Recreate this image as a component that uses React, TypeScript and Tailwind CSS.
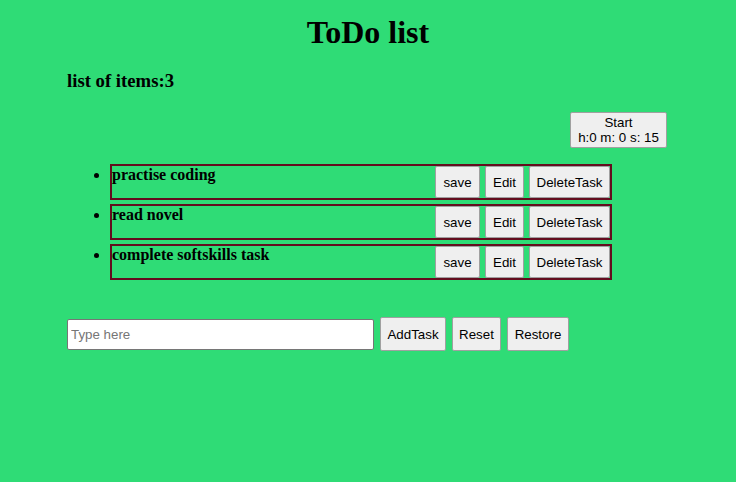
import React from "react";

const tasks = ["practise coding", "read novel", "complete softskills task"];

const btn =
  "bg-[#efefef] border border-[#a0a0a0] rounded-[2px] text-[13.33px] font-normal text-black font-['Liberation_Sans',Arial,sans-serif] leading-[15px]";

export default function App() {
  return (
    <div className="min-h-[482px] w-full bg-[#2fdc76] font-['Liberation_Serif','Times_New_Roman',serif] text-black">
      <h1 className="pt-[14px] text-center text-[32px] font-bold leading-[36px]">ToDo list</h1>
      <div className="ml-[67px] w-[600px]">
        <h3 className="mt-[20px] text-[18.72px] font-bold leading-[21px]">list of items:3</h3>
        <div className="mt-[21px] flex justify-end">
          <button className={`${btn} w-[97px] h-[36px] border-[#8a8a8a]`}>
            Start
            <br />
            h:0 m: 0 s: 15
          </button>
        </div>
        <ul className="mt-[16px] list-disc pl-[43px] flex flex-col gap-[4px]">
          {tasks.map((t) => (
            <li key={t} className="h-[36px] w-[502px] text-[16px] font-bold leading-[18px]">
              <div className="flex h-[36px] border-2 border-[#640d1f]">
                <span className="flex-1">{t}</span>
                <div className="flex gap-[5px]">
                  <button className={`${btn} w-[45px]`}>save</button>
                  <button className={`${btn} w-[39px]`}>Edit</button>
                  <button className={`${btn} w-[81px]`}>DeleteTask</button>
                </div>
              </div>
            </li>
          ))}
        </ul>
        <div className="mt-[37px] flex items-center gap-[6px]">
          <input
            placeholder="Type here"
            className="h-[31px] w-[307px] bg-white border border-[#767676] rounded-[2px] px-[3px] text-[13.33px] font-['Liberation_Sans',Arial,sans-serif] placeholder:text-[#767676] outline-none"
          />
          <button className={`${btn} w-[66px] h-[34px]`}>AddTask</button>
          <button className={`${btn} w-[49px] h-[34px]`}>Reset</button>
          <button className={`${btn} w-[62px] h-[34px]`}>Restore</button>
        </div>
      </div>
    </div>
  );
}
